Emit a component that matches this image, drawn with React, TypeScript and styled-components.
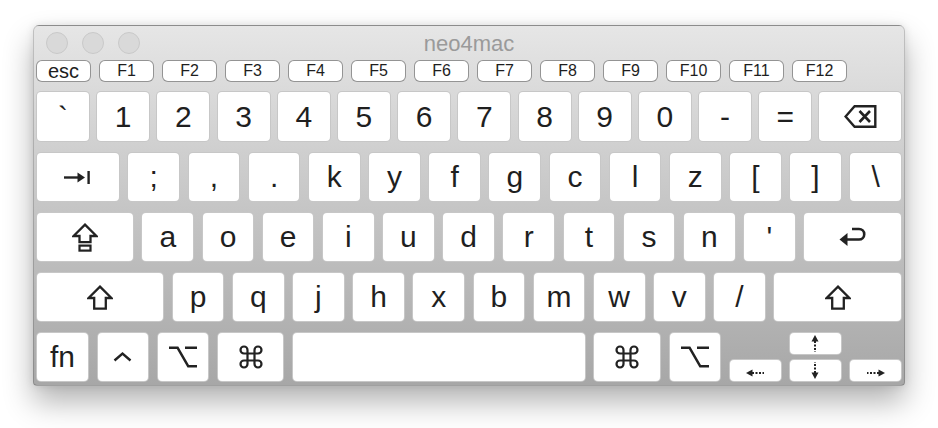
import React from 'react';
import styled, { createGlobalStyle } from 'styled-components';
import { Command } from 'lucide-react';

const GlobalStyle = createGlobalStyle`
  html, body {
    margin: 0;
    background: #ffffff;
  }
  body {
    font-family: 'Liberation Sans', Arial, sans-serif;
  }
`;

const Page = styled.div`
  box-sizing: border-box;
  min-height: 428px;
  padding: 25px 0 40px 33px;
`;

const Window = styled.div`
  box-sizing: border-box;
  width: 872px;
  padding: 0 2px 3px;
  border: 1px solid rgba(0, 0, 0, 0.16);
  border-bottom-color: rgba(0, 0, 0, 0.3);
  border-radius: 6px 6px 4px 4px;
  background: linear-gradient(#e6e6e6, #d2d2d2 30%, #a7a7a7);
  box-shadow: 0 16px 30px rgba(0, 0, 0, 0.3), 0 0 8px rgba(0, 0, 0, 0.1);
`;

const TitleBar = styled.div`
  display: grid;
  grid-template-columns: 1fr auto 1fr;
  align-items: center;
  height: 34px;
`;

const Lights = styled.div`
  display: flex;
  gap: 14px;
  padding-left: 10px;
`;

const Light = styled.span`
  box-sizing: border-box;
  width: 22px;
  height: 22px;
  border-radius: 50%;
  background: #d9d9d9;
  border: 1px solid #c9c9c9;
`;

const Title = styled.div`
  font-size: 22px;
  color: #9a9a9a;
  line-height: 1;
  padding-top: 2px;
`;

const FRow = styled.div`
  display: flex;
  gap: 8px;
  height: 22px;
`;

const FKey = styled.div<{ $big?: boolean }>`
  box-sizing: border-box;
  width: 55px;
  display: flex;
  align-items: center;
  justify-content: center;
  background: #ffffff;
  border: 1px solid rgba(0, 0, 0, 0.42);
  border-radius: 6px;
  color: #1e1e1e;
  font-size: ${p => (p.$big ? 20 : 16)}px;
  line-height: 1;
`;

const Rows = styled.div`
  display: flex;
  flex-direction: column;
  gap: 10px;
  margin-top: 9px;
`;

const Row = styled.div<{ $gap: number; $h: number }>`
  display: flex;
  gap: ${p => p.$gap}px;
  height: ${p => p.$h}px;
`;

const Key = styled.div<{ $w?: number; $pad?: number }>`
  box-sizing: border-box;
  flex: ${p => (p.$w ? `0 0 ${p.$w}px` : '1 1 0')};
  min-width: 0;
  display: flex;
  align-items: center;
  justify-content: center;
  padding-top: ${p => p.$pad ?? 0}px;
  background: #ffffff;
  border: 1px solid rgba(0, 0, 0, 0.22);
  border-radius: 5px;
  color: #1f1f1f;
  font-size: 30px;
  line-height: 1;
`;

const ArrowCluster = styled.div`
  display: flex;
  align-items: flex-end;
  gap: 7.5px;
  flex: 0 0 auto;
`;

const ArrowColumn = styled.div`
  display: flex;
  flex-direction: column;
  gap: 4px;
`;

const ArrowKey = styled(Key)`
  width: 52.7px;
  height: 23px;
  flex: 0 0 auto;
`;

const ink = '#222222';

const Backspace = () => (
  <svg width="33" height="23" viewBox="0 0 33 23">
    <path d="M1.6 11.5 L10.6 1.3 H31.3 V21.7 H10.6 Z" fill="none" stroke={ink} strokeWidth="2.4" />
    <path d="M15.5 6 L26 17 M26 6 L15.5 17" stroke={ink} strokeWidth="2.6" />
  </svg>
);

const Tab = () => (
  <svg width="27" height="13" viewBox="0 0 27 13">
    <path d="M0 6.5 H16" stroke={ink} strokeWidth="2.4" />
    <path d="M13.5 1.5 L21 6.5 L13.5 11.5 Z" fill={ink} />
    <path d="M24.6 0 V13" stroke={ink} strokeWidth="2.4" />
  </svg>
);

const Caps = () => (
  <svg width="26" height="29" viewBox="0 0 26 29">
    <path d="M13 1.6 L24.4 13 H18.5 V19.2 H7.5 V13 H1.6 Z" fill="none" stroke={ink} strokeWidth="2.3" strokeLinejoin="miter" />
    <rect x="7.5" y="22.6" width="11" height="5" fill="none" stroke={ink} strokeWidth="2.2" />
  </svg>
);

const Shift = () => (
  <svg width="26" height="25" viewBox="0 0 26 25">
    <path d="M13 1.6 L24.4 13 H18.8 V23.6 H7.2 V13 H1.6 Z" fill="none" stroke={ink} strokeWidth="2.3" strokeLinejoin="miter" />
  </svg>
);

const Return = () => (
  <svg width="27" height="20" viewBox="0 0 27 20">
    <path d="M13 2 H20 A5.25 5.25 0 0 1 20 12.5 H7" fill="none" stroke={ink} strokeWidth="2.6" />
    <path d="M0.5 12.5 L8.5 6 V19 Z" fill={ink} />
  </svg>
);

const Control = () => (
  <svg width="19" height="10" viewBox="0 0 19 10">
    <path d="M1.5 8.5 L9.5 1.6 L17.5 8.5" fill="none" stroke={ink} strokeWidth="2.4" />
  </svg>
);

const Option = () => (
  <svg width="28" height="22" viewBox="0 0 28 22">
    <path d="M0 1.8 H8.6 L19.2 20.2 H28 M16 1.8 H28" fill="none" stroke={ink} strokeWidth="2.4" />
  </svg>
);

const Cmd = () => <Command size={28} strokeWidth={1.9} color={ink} />;

const ArrowV = ({ down }: { down?: boolean }) => (
  <svg width="8" height="17" viewBox="0 0 8 17" style={down ? { transform: 'rotate(180deg)' } : undefined}>
    <path d="M4 6 V17" stroke={ink} strokeWidth="2" strokeDasharray="2 1.5" />
    <path d="M0.5 6.5 L4 0 L7.5 6.5 Z" fill={ink} />
  </svg>
);

const ArrowH = ({ right }: { right?: boolean }) => (
  <svg width="18" height="8" viewBox="0 0 18 8" style={right ? { transform: 'rotate(180deg)' } : undefined}>
    <path d="M6 4 H18" stroke={ink} strokeWidth="2" strokeDasharray="2 1.5" />
    <path d="M0 4 L6.5 0.5 V7.5 Z" fill={ink} />
  </svg>
);

const fKeys = ['F1', 'F2', 'F3', 'F4', 'F5', 'F6', 'F7', 'F8', 'F9', 'F10', 'F11', 'F12'];
const row1 = ['`', '1', '2', '3', '4', '5', '6', '7', '8', '9', '0', '-', '='];
const row2 = [';', ',', '.', 'k', 'y', 'f', 'g', 'c', 'l', 'z', '[', ']', '\\'];
const row3 = ['a', 'o', 'e', 'i', 'u', 'd', 'r', 't', 's', 'n', "'"];
const row4 = ['p', 'q', 'j', 'h', 'x', 'b', 'm', 'w', 'v', '/'];

const U = 52.7;
const G = 7.48;

export default function App() {
  return (
    <>
      <GlobalStyle />
      <Page>
        <Window>
          <TitleBar>
            <Lights>
              <Light />
              <Light />
              <Light />
            </Lights>
            <Title>neo4mac</Title>
            <div />
          </TitleBar>

          <FRow>
            <FKey $big>esc</FKey>
            {fKeys.map(k => (
              <FKey key={k}>{k}</FKey>
            ))}
          </FRow>

          <Rows>
            <Row $gap={6.2} $h={51}>
              {row1.map(k => (
                <Key key={k} $w={54}>{k}</Key>
              ))}
              <Key><Backspace /></Key>
            </Row>

            <Row $gap={G} $h={50}>
              <Key><Tab /></Key>
              {row2.map(k => (
                <Key key={k} $w={U}>{k}</Key>
              ))}
            </Row>

            <Row $gap={G} $h={50}>
              <Key $w={98}><Caps /></Key>
              {row3.map(k => (
                <Key key={k} $w={U}>{k}</Key>
              ))}
              <Key><Return /></Key>
            </Row>

            <Row $gap={G} $h={50}>
              <Key $w={128.3}><Shift /></Key>
              {row4.map(k => (
                <Key key={k} $w={U}>{k}</Key>
              ))}
              <Key><Shift /></Key>
            </Row>

            <Row $gap={7.5} $h={50}>
              <Key $w={53}>fn</Key>
              <Key $w={U}><Control /></Key>
              <Key $w={U}><Option /></Key>
              <Key $w={67.5}><Cmd /></Key>
              <Key />
              <Key $w={68}><Cmd /></Key>
              <Key $w={U}><Option /></Key>
              <ArrowCluster>
                <ArrowKey $pad={5}><ArrowH /></ArrowKey>
                <ArrowColumn>
                  <ArrowKey><ArrowV /></ArrowKey>
                  <ArrowKey><ArrowV down /></ArrowKey>
                </ArrowColumn>
                <ArrowKey $pad={5}><ArrowH right /></ArrowKey>
              </ArrowCluster>
            </Row>
          </Rows>
        </Window>
      </Page>
    </>
  );
}
